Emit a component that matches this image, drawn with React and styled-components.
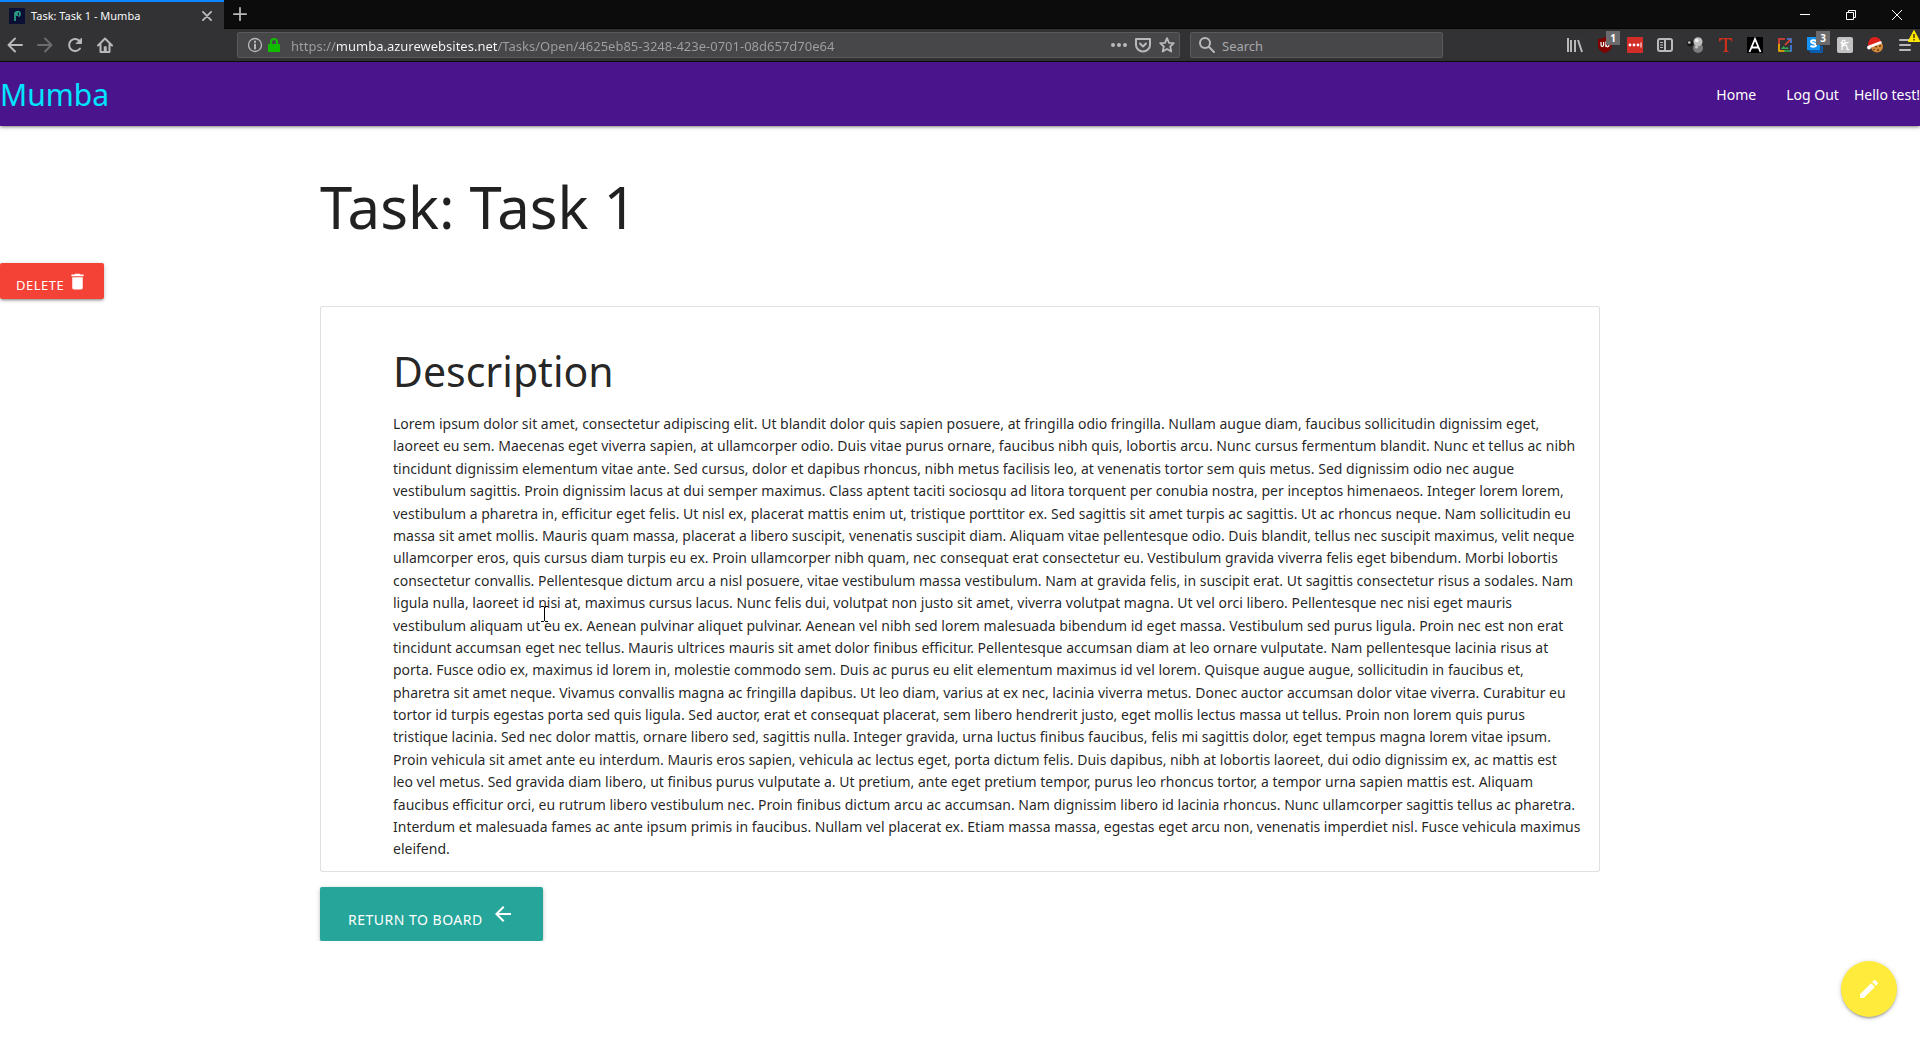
import React from "react";
import styled, { createGlobalStyle } from "styled-components";

const GlobalStyle = createGlobalStyle`
  *, *::before, *::after { box-sizing: border-box; }
  body {
    margin: 0;
    background: #fff;
    color: rgba(0, 0, 0, 0.87);
    font-family: "Segoe UI", "Noto Sans", "Open Sans", sans-serif;
    font-size: 14px;
    line-height: 1.6;
  }
  button, input { font: inherit; }
  svg { display: block; flex: none; }
`;

/* ---------- browser window ---------- */

const TabBar = styled.header`
  display: flex;
  height: 29px;
  background: #0c0c0d;
  border-bottom: 1px solid #050505;
`;

const Tab = styled.div`
  display: flex;
  align-items: center;
  width: 224px;
  height: 29px;
  padding: 0 12px 0 9px;
  gap: 6px;
  background: #323234;
  border-top: 2px solid #0a84ff;
  color: #f9f9fa;
`;

const TabTitle = styled.span`
  flex: 1;
  font-size: 11px;
  line-height: 16px;
  white-space: nowrap;
`;

const BareButton = styled.button`
  display: flex;
  align-items: center;
  justify-content: center;
  flex: none;
  padding: 0;
  border: 0;
  background: none;
  color: ${(p) => p.$color || "#b9b9ba"};
  width: ${(p) => p.$w || 30}px;
  height: ${(p) => p.$h || 32}px;
  position: relative;
`;

const WindowButtons = styled.div`
  display: flex;
  margin-left: auto;
`;

const Toolbar = styled.div`
  display: flex;
  align-items: center;
  height: 33px;
  background: #323234;
  border-bottom: 1px solid #0c0c0d;
`;

const Spacer = styled.div`
  flex: 0 1 117px;
`;

const Field = styled.div`
  display: flex;
  align-items: center;
  height: 26px;
  background: #474749;
  border: 1px solid #5a5a5c;
  border-radius: 2px;
`;

const UrlField = styled(Field)`
  flex: 1;
  min-width: 0;
  margin-right: 10px;
  padding: 0 4px 0 9px;
`;

const SearchField = styled(Field)`
  width: 253px;
  padding: 0 8px;
  gap: 7px;
`;

const FieldIcons = styled.div`
  display: flex;
  align-items: center;
  gap: 8px;
  color: #b9b9ba;
`;

const UrlInput = styled.input`
  flex: 1;
  min-width: 0;
  height: 24px;
  margin-left: 10px;
  padding: 1px 0 0;
  border: 0;
  outline: 0;
  font-size: 13px;
  color: #a0a0a2;
  background: linear-gradient(90deg, #a0a0a2 46px, #f9f9fa 46px, #f9f9fa 206px, #a0a0a2 206px);
  background-clip: text;
  -webkit-background-clip: text;
  -webkit-text-fill-color: transparent;
`;

const SearchInput = styled.input`
  flex: 1;
  min-width: 0;
  height: 24px;
  padding: 1px 0 0;
  border: 0;
  outline: 0;
  font-size: 13px;
  background: none;
  color: #f9f9fa;
  &::placeholder { color: #a8a8aa; opacity: 1; }
`;

const Extensions = styled.div`
  display: flex;
`;

const Badge = styled.span`
  position: absolute;
  top: 2px;
  left: 16px;
  width: 14px;
  height: 14px;
  background: #6b6b6d;
  color: #fff;
  font-size: 10px;
  font-weight: 700;
  line-height: 14px;
  text-align: center;
`;

const Warning = styled.span`
  position: absolute;
  top: 1px;
  left: 18px;
`;

/* ---------- page ---------- */

const shadow =
  "0 2px 2px 0 rgba(0,0,0,0.14), 0 3px 1px -2px rgba(0,0,0,0.12), 0 1px 5px 0 rgba(0,0,0,0.2)";

const NavBar = styled.nav`
  display: flex;
  align-items: center;
  justify-content: space-between;
  height: 64px;
  padding-top: 2px;
  background: #4a148c;
  box-shadow: ${shadow};
`;

const Brand = styled.a`
  color: #00e5ff;
  font-size: 30px;
  line-height: 62px;
  text-decoration: none;
`;

const NavLinks = styled.div`
  display: flex;
  line-height: 60px;
  color: #fff;
`;

const NavLink = styled.a`
  padding: 0 15px;
  color: inherit;
  text-decoration: none;
`;

const Container = styled.div`
  width: calc(100% - 40px);
  max-width: 1280px;
  margin: 0 auto;
`;

const Title = styled.h1`
  margin: 46px 0 22px;
  font-size: 58px;
  font-weight: 400;
  line-height: 69px;
`;

const RaisedButton = styled.button`
  display: flex;
  align-items: center;
  height: ${(p) => (p.$large ? 54 : 36)}px;
  padding: 0 ${(p) => (p.$large ? 28 : 16)}px;
  gap: ${(p) => (p.$large ? 8 : 3)}px;
  border: 0;
  border-radius: 2px;
  background: ${(p) => p.$bg};
  color: #fff;
  font-size: ${(p) => (p.$large ? 14 : 13)}px;
  line-height: 20px;
  letter-spacing: 0.5px;
  text-transform: uppercase;
  box-shadow: ${shadow};
`;

const ButtonLabel = styled.span`
  padding-top: ${(p) => (p.$large ? 12 : 8)}px;
`;

const Card = styled.section`
  position: relative;
  margin: 7px 0 15px;
  padding: 10px 20px 10px 72px;
  border: 1px solid #e0e0e0;
  border-radius: 2px;
`;

const CardTitle = styled.h2`
  margin: 30px 0 18px;
  font-size: 41px;
  font-weight: 400;
  line-height: 48px;
`;

const Description = styled.p`
  margin: 0;
  white-space: pre;
`;

const TextCursor = styled.svg`
  position: absolute;
  left: 220px;
  top: 299px;
`;

const EditButton = styled.button`
  position: fixed;
  right: 23px;
  bottom: 23px;
  display: flex;
  align-items: center;
  justify-content: center;
  width: 56px;
  height: 56px;
  padding: 0;
  border: 0;
  border-radius: 50%;
  background: #ffeb3b;
  color: #fff;
  box-shadow: ${shadow};
`;

/* ---------- icons ---------- */

const Line = ({ size = 16, width = 2, children }) => (
  <svg width={size} height={size} viewBox="0 0 16 16" fill="none" stroke="currentColor"
    strokeWidth={width} strokeLinecap="round" strokeLinejoin="round" aria-hidden="true">
    {children}
  </svg>
);

const Material = ({ size = 24, d }) => (
  <svg width={size} height={size} viewBox="0 0 24 24" fill="currentColor" aria-hidden="true">
    <path d={d} />
  </svg>
);

const extensions = [
  {
    name: "Library",
    art: (
      <g stroke="#b9b9ba" strokeWidth="2">
        <path d="M1 1v14M4 3v12M8 3v12M11 3l4 12" />
      </g>
    ),
  },
  {
    name: "uBlock",
    badge: "1",
    art: (
      <g>
        <path d="M8 0c2 1.500 4 2 7 2v6c0 4-3 6.500-7 8-4-1.500-7-4-7-8V2c3 0 5-.5 7-2z" fill="#800000" />
        <path d="M4 5v3a1.300 1.300 0 0 0 2.600 0V5M9 4.500V10" stroke="#fff" strokeWidth="1.200" />
        <circle cx="10.500" cy="8.300" r="1.500" stroke="#fff" strokeWidth="1.200" />
      </g>
    ),
  },
  {
    name: "LastPass",
    art: (
      <g>
        <rect width="16" height="16" rx="1" fill="#d32d27" />
        <g fill="#fff">
          <circle cx="3" cy="8" r="1.400" /><circle cx="7" cy="8" r="1.400" /><circle cx="11" cy="8" r="1.400" />
          <path d="M13.500 5.500h1v5h-1z" />
        </g>
      </g>
    ),
  },
  {
    name: "Sidebar",
    art: (
      <g stroke="#b9b9ba" strokeWidth="2">
        <rect x="1" y="2" width="14" height="12" rx="2" />
        <path d="M8 2v12" />
        <path d="M3 5.500h3M3 8h3M3 10.500h3" strokeWidth="1" />
      </g>
    ),
  },
  {
    name: "Spheres",
    art: (
      <g>
        <circle cx="11" cy="11" r="5" fill="#7c7c7c" />
        <circle cx="11" cy="4.800" r="4.500" fill="#bdbdbd" />
        <circle cx="9.800" cy="3.500" r="1.800" fill="#efefef" />
        <circle cx="9.500" cy="10" r="1.600" fill="#c4c4c4" />
        <circle cx="3.200" cy="6.500" r="3" fill="#161616" />
        <circle cx="2.300" cy="5.500" r="1.300" fill="#c9c9c9" />
      </g>
    ),
  },
  {
    name: "Text tool",
    art: (
      <path d="M2 1h13l.3 3.500h-.8C14 2.800 13 2.300 10 2.300v11.200l1.800 1v.5H6v-.5l1.800-1V2.300C5 2.300 3.500 2.800 3 4.500h-1z" fill="#c8301c" />
    ),
  },
  {
    name: "Font tool",
    art: (
      <g>
        <rect width="16" height="16" fill="#000" />
        <path d="M2.500 15L8 2l5.500 13M4.500 10.500h7" stroke="#fff" strokeWidth="1.800" />
      </g>
    ),
  },
  {
    name: "View image",
    art: (
      <g strokeWidth="1.600">
        <path d="M8 2H2v6" stroke="#e94335" />
        <path d="M2 7v7h6" stroke="#fabb05" />
        <path d="M7 14h7" stroke="#34a853" />
        <path d="M14 14.800V8" stroke="#4285f4" />
        <path d="M3.800 12l2.700-3 2 2 1.500-1.300 2 2.300z" fill="#34a853" />
        <path d="M10 2h4v4" stroke="#4285f4" />
        <path d="M8 8l5.500-5.500" stroke="#e94335" />
      </g>
    ),
  },
  {
    name: "Stylus",
    badge: "3",
    art: (
      <g>
        <path d="M0 12h13l3 4H4z" fill="#0b5cad" />
        <path d="M12.500 9H16v7z" fill="#0b5cad" />
        <path d="M0 0h13v13H0z" fill="#1292f5" />
        <path d="M9.500 4C7 2.800 4 3 4 4.800s5 1.200 5 3.200S5.500 10 3.500 8.800" stroke="#fff" strokeWidth="2" />
      </g>
    ),
  },
  {
    name: "Honey",
    art: (
      <g>
        <rect width="16" height="16" rx="2" fill="#c2c2c3" />
        <path d="M5 13V5c0-2.500 3-2.500 3-.5C8 7 5 8 5 10c1-2 5-3 5 0v2c0 1 1.500 1 2 0M3.500 5.500C6 7 10 6.500 11.500 5" stroke="#fff" strokeWidth="1.200" />
      </g>
    ),
  },
  {
    name: "Cookies",
    art: (
      <g>
        <circle cx="10" cy="9.500" r="6" fill="#d18a3c" />
        <g fill="#6b3d12">
          <circle cx="9" cy="9.500" r="1" /><circle cx="13" cy="9" r="1" /><circle cx="11" cy="13" r="1" /><circle cx="7" cy="12.500" r=".8" />
        </g>
        <path d="M1 9C1 3 4 0 8 0c4 .5 6 3 6.500 6L4 10z" fill="#e0211b" />
        <path d="M3 9.500L13.500 5.500" stroke="#fff" strokeWidth="2.500" strokeLinecap="round" />
        <circle cx="2" cy="10.500" r="1.900" fill="#fff" />
      </g>
    ),
  },
];

const description = `Lorem ipsum dolor sit amet, consectetur adipiscing elit. Ut blandit dolor quis sapien posuere, at fringilla odio fringilla. Nullam augue diam, faucibus sollicitudin dignissim eget,
laoreet eu sem. Maecenas eget viverra sapien, at ullamcorper odio. Duis vitae purus ornare, faucibus nibh quis, lobortis arcu. Nunc cursus fermentum blandit. Nunc et tellus ac nibh
tincidunt dignissim elementum vitae ante. Sed cursus, dolor et dapibus rhoncus, nibh metus facilisis leo, at venenatis tortor sem quis metus. Sed dignissim odio nec augue
vestibulum sagittis. Proin dignissim lacus at dui semper maximus. Class aptent taciti sociosqu ad litora torquent per conubia nostra, per inceptos himenaeos. Integer lorem lorem,
vestibulum a pharetra in, efficitur eget felis. Ut nisl ex, placerat mattis enim ut, tristique porttitor ex. Sed sagittis sit amet turpis ac sagittis. Ut ac rhoncus neque. Nam sollicitudin eu
massa sit amet mollis. Mauris quam massa, placerat a libero suscipit, venenatis suscipit diam. Aliquam vitae pellentesque odio. Duis blandit, tellus nec suscipit maximus, velit neque
ullamcorper eros, quis cursus diam turpis eu ex. Proin ullamcorper nibh quam, nec consequat erat consectetur eu. Vestibulum gravida viverra felis eget bibendum. Morbi lobortis
consectetur convallis. Pellentesque dictum arcu a nisl posuere, vitae vestibulum massa vestibulum. Nam at gravida felis, in suscipit erat. Ut sagittis consectetur risus a sodales. Nam
ligula nulla, laoreet id nisi at, maximus cursus lacus. Nunc felis dui, volutpat non justo sit amet, viverra volutpat magna. Ut vel orci libero. Pellentesque nec nisi eget mauris
vestibulum aliquam ut eu ex. Aenean pulvinar aliquet pulvinar. Aenean vel nibh sed lorem malesuada bibendum id eget massa. Vestibulum sed purus ligula. Proin nec est non erat
tincidunt accumsan eget nec tellus. Mauris ultrices mauris sit amet dolor finibus efficitur. Pellentesque accumsan diam at leo ornare vulputate. Nam pellentesque lacinia risus at
porta. Fusce odio ex, maximus id lorem in, molestie commodo sem. Duis ac purus eu elit elementum maximus id vel lorem. Quisque augue augue, sollicitudin in faucibus et,
pharetra sit amet neque. Vivamus convallis magna ac fringilla dapibus. Ut leo diam, varius at ex nec, lacinia viverra metus. Donec auctor accumsan dolor vitae viverra. Curabitur eu
tortor id turpis egestas porta sed quis ligula. Sed auctor, erat et consequat placerat, sem libero hendrerit justo, eget mollis lectus massa ut tellus. Proin non lorem quis purus
tristique lacinia. Sed nec dolor mattis, ornare libero sed, sagittis nulla. Integer gravida, urna luctus finibus faucibus, felis mi sagittis dolor, eget tempus magna lorem vitae ipsum.
Proin vehicula sit amet ante eu interdum. Mauris eros sapien, vehicula ac lectus eget, porta dictum felis. Duis dapibus, nibh at lobortis laoreet, dui odio dignissim ex, ac mattis est
leo vel metus. Sed gravida diam libero, ut finibus purus vulputate a. Ut pretium, ante eget pretium tempor, purus leo rhoncus tortor, a tempor urna sapien mattis est. Aliquam
faucibus efficitur orci, eu rutrum libero vestibulum nec. Proin finibus dictum arcu ac accumsan. Nam dignissim libero id lacinia rhoncus. Nunc ullamcorper sagittis tellus ac pharetra.
Interdum et malesuada fames ac ante ipsum primis in faucibus. Nullam vel placerat ex. Etiam massa massa, egestas eget arcu non, venenatis imperdiet nisl. Fusce vehicula maximus
eleifend.`;

function Browser() {
  return (
    <>
      <TabBar>
        <Tab>
          <svg width="16" height="16" viewBox="0 0 16 16" fill="none" aria-hidden="true">
            <rect width="16" height="16" fill="#0a0f33" />
            <path d="M6 13V5.500C6 4.500 7 4 8 4v4M8 8V4c1-1 3 0 3 1.500S10 8 9.500 8" stroke="#2c9c86" strokeWidth="1.800" />
          </svg>
          <TabTitle>Task: Task 1 - Mumba</TabTitle>
          <BareButton type="button" aria-label="Close tab" $w={10} $h={27}>
            <Line size={10} width={3}><path d="M1.500 1.500l13 13M14.500 1.500l-13 13" /></Line>
          </BareButton>
        </Tab>
        <BareButton type="button" aria-label="New tab" $w={32} $h={28}>
          <Line size={14}><path d="M8 1v14M1 8h14" /></Line>
        </BareButton>
        <WindowButtons>
          <BareButton type="button" aria-label="Minimise" $w={46} $h={29} $color="#fff">
            <svg width="10" height="10" viewBox="0 0 10 10" stroke="currentColor" aria-hidden="true"><path d="M0 4.500h10" /></svg>
          </BareButton>
          <BareButton type="button" aria-label="Restore" $w={46} $h={29} $color="#fff">
            <svg width="10" height="10" viewBox="0 0 10 10" fill="none" stroke="currentColor" aria-hidden="true"><path d="M.5 2.500h7v7h-7zM2.500 2.500v-2h7v7h-2" /></svg>
          </BareButton>
          <BareButton type="button" aria-label="Close window" $w={46} $h={29} $color="#fff">
            <svg width="10" height="10" viewBox="0 0 10 10" stroke="currentColor" aria-hidden="true"><path d="M0 0l10 10M10 0L0 10" /></svg>
          </BareButton>
        </WindowButtons>
      </TabBar>
      <Toolbar>
        <BareButton type="button" aria-label="Back">
          <Line><path d="M15 8H1.500M8 1.500L1.500 8 8 14.500" /></Line>
        </BareButton>
        <BareButton type="button" aria-label="Forward" $color="#6c6c6e">
          <Line><path d="M1 8h13.500M8 1.500L14.500 8 8 14.500" /></Line>
        </BareButton>
        <BareButton type="button" aria-label="Reload">
          <Line><path d="M13 11.500A6 6 0 1 1 13 4.500" /><path d="M14.500 1.500v5h-5z" fill="currentColor" strokeWidth="1" /></Line>
        </BareButton>
        <BareButton type="button" aria-label="Home">
          <Line><path d="M1 8.500L8 1.500l7 7M3.500 7.500V15h9V7.500" /><path d="M7.500 14v-4h1.500v4" strokeWidth="1.500" /></Line>
        </BareButton>
        <Spacer />
        <UrlField>
          <FieldIcons>
            <Line width={1.3}><circle cx="8" cy="8" r="6.500" /><path d="M8 7.500v4M8 4.600v.3" strokeWidth="2" /></Line>
          </FieldIcons>
          <svg width="18" height="16" viewBox="0 0 18 16" fill="none" aria-hidden="true">
            <rect x="5" y="7" width="12" height="8" rx="1" fill="#12bc00" />
            <path d="M8 8V5a3 3 0 0 1 6 0v3" stroke="#12bc00" strokeWidth="2" />
          </svg>
          <UrlInput aria-label="Address" defaultValue="https://mumba.azurewebsites.net/Tasks/Open/4625eb85-3248-423e-0701-08d657d70e64" />
          <FieldIcons>
            <svg width="16" height="16" viewBox="0 0 16 16" fill="currentColor" aria-hidden="true">
              <circle cx="2" cy="8" r="2" /><circle cx="8" cy="8" r="2" /><circle cx="14" cy="8" r="2" />
            </svg>
            <Line><path d="M1 2h14v6a7 6.500 0 0 1-14 0zM5 6.500l3 3 3-3" /></Line>
            <Line width={1.8}><path d="M8 1.200l2 4.600 4.800.4-3.600 3.300 1.100 5L8 12l-4.300 2.500 1.100-5L1.200 6.200l4.800-.4z" /></Line>
          </FieldIcons>
        </UrlField>
        <SearchField>
          <FieldIcons>
            <Line><circle cx="6" cy="6" r="5" /><path d="M10 10l5 5" /></Line>
          </FieldIcons>
          <SearchInput type="search" aria-label="Search" placeholder="Search" />
        </SearchField>
        <Spacer />
        <Extensions>
          {extensions.map((e) => (
            <BareButton key={e.name} type="button" aria-label={e.name}>
              <svg width="16" height="16" viewBox="0 0 16 16" fill="none" aria-hidden="true">{e.art}</svg>
              {e.badge && <Badge>{e.badge}</Badge>}
            </BareButton>
          ))}
          <BareButton type="button" aria-label="Menu">
            <Line><path d="M3 3h10M3 8h10M3 13h10" /></Line>
            <Warning>
              <svg width="12" height="12" viewBox="0 0 12 12" aria-hidden="true">
                <path d="M6 .5L11.800 11.500H.2z" fill="#ffe900" stroke="#ffe900" strokeLinejoin="round" />
                <path d="M6 4v4M6 9v1.500" stroke="#3e2800" strokeWidth="1.400" />
              </svg>
            </Warning>
          </BareButton>
        </Extensions>
      </Toolbar>
    </>
  );
}

export default function App() {
  return (
    <>
      <GlobalStyle />
      <Browser />
      <NavBar>
        <Brand href="#">Mumba</Brand>
        <NavLinks>
          <NavLink href="#">Home</NavLink>
          <NavLink href="#">Log Out</NavLink>
          <span>Hello test!</span>
        </NavLinks>
      </NavBar>
      <main>
        <Container>
          <Title>Task: Task 1</Title>
        </Container>
        <RaisedButton type="button" $bg="#f44336">
          <ButtonLabel>Delete</ButtonLabel>
          <Material size={21} d="M6 19c0 1.100.9 2 2 2h8c1.100 0 2-.9 2-2V7H6v12zM19 4h-3.500l-1-1h-5l-1 1H5v2h14V4z" />
        </RaisedButton>
        <Container>
          <Card>
            <CardTitle>Description</CardTitle>
            <Description>{description}</Description>
            <TextCursor width="7" height="16" viewBox="0 0 7 16" fill="none" stroke="#000" aria-hidden="true">
              <path d="M0 .5h3M4 .5h3M3.500 1v14M0 15.500h3M4 15.500h3" />
            </TextCursor>
          </Card>
          <RaisedButton type="button" $large $bg="#26a69a">
            <ButtonLabel $large>Return to board</ButtonLabel>
            <Material d="M20 11H7.830l5.590-5.590L12 4l-8 8 8 8 1.410-1.410L7.830 13H20v-2z" />
          </RaisedButton>
        </Container>
      </main>
      <EditButton type="button" aria-label="Edit task">
        <Material d="M3 17.250V21h3.750L17.810 9.940l-3.750-3.750L3 17.250zM20.710 7.040c.39-.39.39-1.020 0-1.410l-2.340-2.340c-.39-.39-1.020-.39-1.410 0l-1.830 1.830 3.750 3.750 1.830-1.830z" />
      </EditButton>
    </>
  );
}
